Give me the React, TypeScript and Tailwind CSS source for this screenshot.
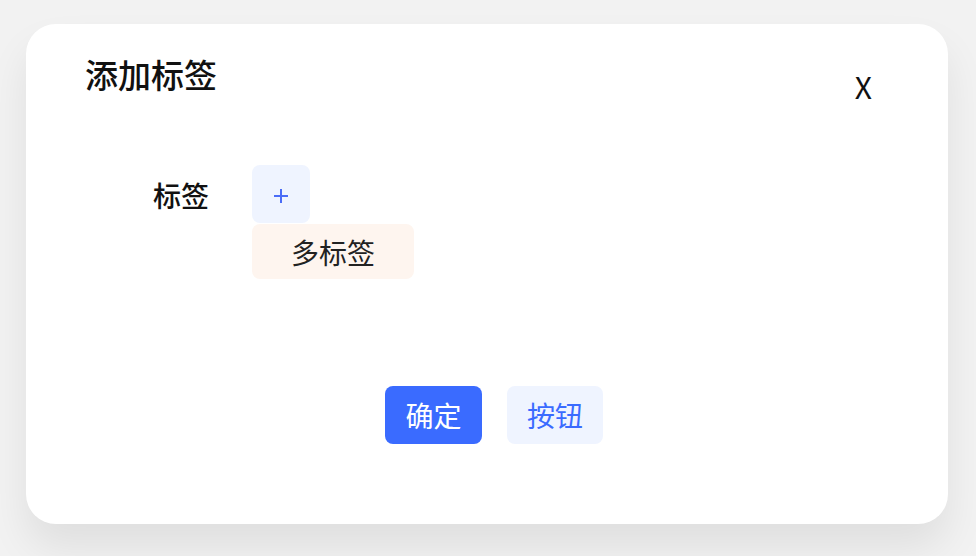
const FONT = "font-['Noto_Sans_CJK_SC','Noto_Sans',sans-serif]";

function PlusTag() {
  return (
    <button className="flex h-[58px] w-[58px] items-center justify-center rounded-[8px] bg-[#eff4ff]">
      <svg width="16" height="16" viewBox="0 0 16 16" className="mt-[4px]">
        <path d="M8 1v14M1 8h14" stroke="#4a6cf7" strokeWidth="2" fill="none" />
      </svg>
    </button>
  );
}

export default function App() {
  return (
    <div className={`h-[556px] w-[976px] overflow-hidden bg-[#f2f2f2] pt-[24px] pl-[26px] ${FONT}`}>
      <div className="h-[500px] w-[922px] rounded-[30px] bg-white shadow-[0_24px_40px_rgba(0,0,0,0.08)]">
        <div className="flex items-start justify-between pl-[59px] pr-[76px] pt-[28px]">
          <h1 className="text-[33px] font-medium leading-[44px] text-[#111]">添加标签</h1>
          <button className="mt-[15px] text-[30px] leading-[38px] text-[#111]">X</button>
        </div>

        <div className="mt-[60px] flex items-start gap-[43px] pl-[127px]">
          <span className="mt-[12px] w-[56px] text-[28px] font-medium leading-[36px] text-[#111]">标签</span>
          <div className="flex flex-col items-start">
            <PlusTag />
            <div className="mt-[1px] flex h-[55px] w-[162px] items-center justify-center rounded-[8px] bg-[#fef5ef] text-[28px] text-[#222]">
              多标签
            </div>
          </div>
        </div>

        <div className="mt-[107px] flex justify-center gap-[25px] pl-[14px]">
          <button className="h-[58px] w-[97px] rounded-[8px] bg-[#3a6bff] text-[28px] text-white">确定</button>
          <button className="h-[58px] w-[96px] rounded-[8px] bg-[#eff4ff] text-[28px] text-[#3a6bff]">按钮</button>
        </div>
      </div>
    </div>
  );
}
